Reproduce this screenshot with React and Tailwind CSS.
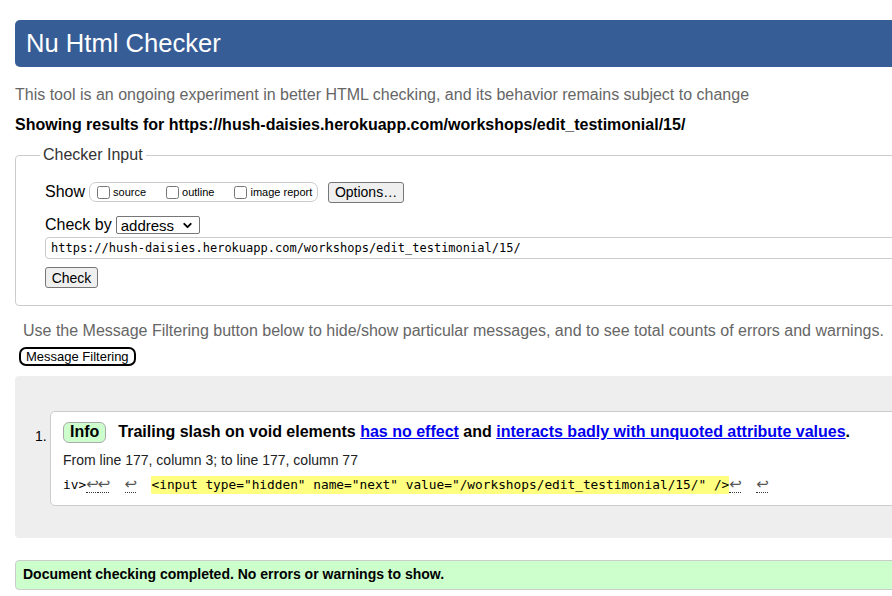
import { ChevronDown } from "lucide-react"

const Ret = () => (
  <span
    className="inline-block w-[11.5px] text-center text-[15px] text-[#555] border-b border-dotted border-[#333] leading-[15px]"
    style={{ fontFamily: '"DejaVu Sans", sans-serif' }}
  >
    ↩
  </span>
)

const Box = ({ label }) => (
  <label className="flex items-center mr-[17px] last:mr-0">
    <input type="checkbox" className="w-[13px] h-[13px] m-0 mr-[2px] ml-[3px]" />
    <span className="text-[11px] pl-[1px]">{label}</span>
  </label>
)

const mono = { fontFamily: '"DejaVu Sans Mono", "Liberation Mono", monospace' }

export default function App() {
  return (
    <div
      className="w-[892px] h-[596px] overflow-hidden bg-white text-black"
      style={{ fontFamily: '"Liberation Sans", Arial, sans-serif' }}
    >
      <div className="w-[1100px] pl-[15px] pt-[20px]">
        <div className="h-[47px] bg-[#365d95] rounded-[5px] flex items-center pl-[11px]">
          <h1 className="text-white text-[25.6px] leading-none">Nu Html Checker</h1>
        </div>

        <p className="mt-[18px] text-[16px] leading-[20px] text-[#666]">
          This tool is an ongoing experiment in better HTML checking, and its behavior remains subject to change
        </p>
        <p className="mt-[10px] text-[16px] leading-[20px] font-bold">
          Showing results for https://hush-daisies.herokuapp.com/workshops/edit_testimonial/15/
        </p>

        <fieldset className="mt-[10px] border border-[#ccc] rounded-[4px] pl-[29px] pb-[15px] pt-[16px]">
          <legend className="-ml-[5px] px-[3px] text-[16px] leading-[20px] text-[#333]">Checker Input</legend>

          <div className="flex items-center h-[22px]">
            <span className="text-[16px] mr-[4px]">Show</span>
            <div className="flex items-center h-[20px] w-[229px] border border-[#ccc] rounded-[7px] pl-[4px]">
              <Box label="source" />
              <Box label="outline" />
              <Box label="image report" />
            </div>
            <button className="ml-[10px] h-[21px] w-[76px] bg-[#efefef] border border-[#767676] rounded-[3px] text-[14px] leading-none">
              Options…
            </button>
          </div>

          <div className="flex items-center mt-[13px] h-[18px]">
            <span className="text-[16px] mr-[4px]">Check by</span>
            <div className="flex items-center justify-between w-[84px] h-[18px] border border-[#767676] rounded-[2px] pl-[4px] pr-[5px]">
              <span className="text-[15px] leading-none">address</span>
              <ChevronDown size={13} strokeWidth={3.5} />
            </div>
          </div>

          <div className="mt-[3px] h-[22px] border border-[#ccc] rounded-[4px] flex items-center pl-[5px]">
            <span className="text-[12px]" style={mono}>
              https://hush-daisies.herokuapp.com/workshops/edit_testimonial/15/
            </span>
          </div>

          <button className="mt-[8px] h-[21px] w-[53px] bg-[#efefef] border border-[#767676] rounded-[3px] text-[14px] leading-none">
            Check
          </button>
        </fieldset>

        <p className="mt-[15px] ml-[8px] text-[16px] leading-[20px] text-[#666]">
          Use the Message Filtering button below to hide/show particular messages, and to see total counts of errors and warnings.
        </p>
        <button className="mt-[6px] ml-[4px] h-[19px] px-[5px] border-2 border-black rounded-[7px] bg-white text-[13px] leading-none">
          Message Filtering
        </button>

        <div className="mt-[8px] h-[162px] bg-[#eee] rounded-[4px] pt-[35px] pl-[20px]">
          <div className="flex">
            <div className="w-[15px] text-[14px] pt-[15px]">1.</div>
            <div className="flex-1 h-[95px] bg-white border border-[#ccc] rounded-[5px] pl-[12px] pt-[10px]">
              <div className="flex items-center text-[16px] font-bold leading-[20px]">
                <span className="h-[21px] px-[6px] bg-[#ccffcc] border border-[#aaa] rounded-[6px] flex items-center mr-[12px]">
                  Info
                </span>
                <span>
                  Trailing slash on void elements{" "}
                  <a className="text-[#0000ee] underline">has no effect</a> and{" "}
                  <a className="text-[#0000ee] underline">interacts badly with unquoted attribute values</a>.
                </span>
              </div>
              <div className="mt-[8px] text-[14px] leading-[18px] text-[#222]">
                From line 177, column 3; to line 177, column 77
              </div>
              <div className="mt-[7px] text-[12.8px] leading-[18px] whitespace-pre flex items-center" style={mono}>
                <span>iv&gt;</span>
                <Ret />
                <Ret />
                <span>  </span>
                <Ret />
                <span>  </span>
                <span className="bg-[#ffff80]">{'<input type="hidden" name="next" value="/workshops/edit_testimonial/15/" />'}</span>
                <Ret />
                <span>  </span>
                <Ret />
              </div>
            </div>
          </div>
        </div>

        <div className="mt-[22px] h-[30px] bg-[#ccffcc] border border-[#ccc] rounded-[4px] flex items-center pl-[7px]">
          <span className="text-[14px] font-bold">Document checking completed. No errors or warnings to show.</span>
        </div>
      </div>
    </div>
  )
}
